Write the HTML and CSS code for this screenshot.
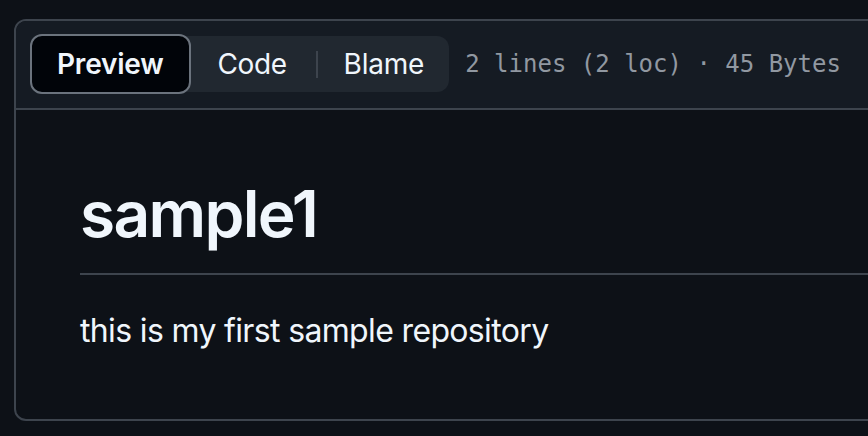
FILE: index.html
```html
<!DOCTYPE html>
<html>
<head>
<meta charset="utf-8">
<link rel="stylesheet" href="styles.css">
</head>
<body>
<div class="page">
  <div class="card">
    <div class="card-header">
      <div class="segmented">
        <button class="seg seg-selected">Preview</button>
        <button class="seg seg-code">Code</button>
        <span class="seg-divider"></span>
        <button class="seg seg-blame">Blame</button>
      </div>
      <div class="meta">2 lines (2 loc) · 45 Bytes</div>
    </div>
    <article class="markdown">
      <h1 class="md-h1">sample1</h1>
      <p class="md-p">this is my first sample repository</p>
    </article>
  </div>
</div>
</body>
</html>
```
FILE: styles.css
```css
html, body {
  margin: 0;
  padding: 0;
  background: #0d1117;
  overflow: hidden;
}
.page {
  padding: 19px 0 0 14px;
  width: 1100px;
  font-family: Inter, "Noto Sans", sans-serif;
  color: #f0f6fc;
}
.card {
  border: 2px solid #3d444d;
  border-radius: 12px;
  background: #0d1117;
  overflow: hidden;
}
.card-header {
  display: flex;
  align-items: center;
  background: #151b23;
  border-bottom: 2px solid #3d444d;
  padding: 15px 14px 16px 14px;
}
.segmented {
  display: flex;
  align-items: center;
  height: 56px;
  background: #212830;
  border-radius: 12px;
}
.seg {
  font-family: Inter, "Noto Sans", sans-serif;
  font-size: 28px;
  font-weight: 400;
  color: #f0f6fc;
  background: transparent;
  border: 0;
  padding: 0 28px;
  height: 56px;
  line-height: 56px;
  letter-spacing: -0.2px;
}
.seg-code {
  padding: 0 29px 0 27px;
  letter-spacing: -0.45px;
}
.seg-blame {
  padding: 0 25px 0 26px;
}
.seg-selected {
  font-weight: 600;
  background: #010409;
  border: 2px solid #6b737d;
  border-radius: 12px;
  height: 60px;
  margin: -2px 0;
  padding: 0 25px;
  line-height: 54px;
}
.seg-divider {
  width: 2px;
  height: 27px;
  background: #3d444d;
}
.meta {
  margin-left: 16px;
  font-family: "DejaVu Sans Mono", "Liberation Mono", monospace;
  font-size: 24px;
  color: #9198a1;
  white-space: nowrap;
}
.markdown {
  padding: 64px;
}
.md-h1 {
  margin: 0 0 32px 0;
  font-size: 64px;
  font-weight: 600;
  line-height: 80px;
  padding-bottom: 19px;
  border-bottom: 2px solid #3d444d;
  letter-spacing: -1.7px;
}
.md-p {
  margin: 0;
  font-size: 32px;
  line-height: 48px;
  letter-spacing: -0.65px;
}
```
